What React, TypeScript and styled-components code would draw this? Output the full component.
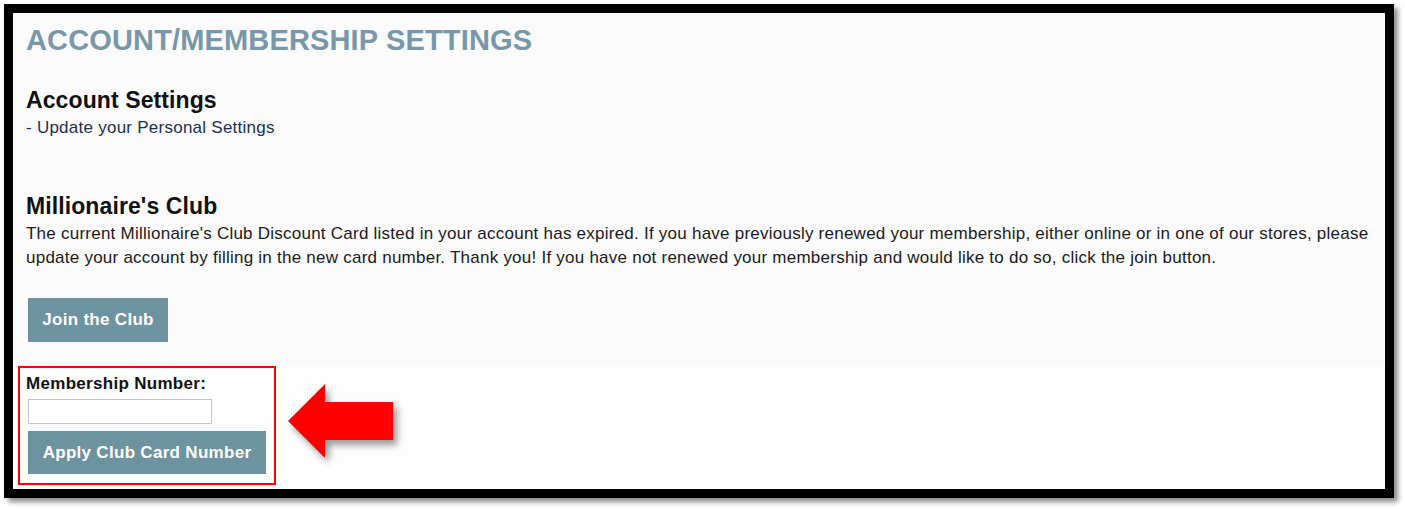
import React from "react";
import styled, { createGlobalStyle } from "styled-components";

const GlobalStyle = createGlobalStyle`
  html, body {
    margin: 0;
    padding: 0;
    background: #ffffff;
  }
  body {
    font-family: "Liberation Sans", Arial, sans-serif;
  }
`;

const Page = styled.div`
  width: 1405px;
  height: 509px;
  padding: 4px 11px 11px 4px;
  box-sizing: border-box;
  background: #ffffff;
`;

const Frame = styled.div`
  height: 494px;
  box-sizing: border-box;
  border: 9px solid #000000;
  box-shadow: 4px 4px 5px rgba(0, 0, 0, 0.45);
  display: flex;
  flex-direction: column;
  background: #fdfdfd;
`;

const UpperSection = styled.section`
  background: #fafafa;
  padding: 10px 8px 24px 13px;
  display: flex;
  flex-direction: column;
  align-items: flex-start;
`;

const PageTitle = styled.h1`
  margin: 0;
  font-size: 29px;
  line-height: 34px;
  letter-spacing: 0.15px;
  font-weight: bold;
  color: #7897a8;
`;

const SectionTitle = styled.h2<{ gap: number }>`
  margin: ${(p) => p.gap}px 0 0;
  font-size: 23px;
  line-height: 22px;
  letter-spacing: 0.1px;
  font-weight: bold;
  color: #111111;
`;

const SettingsLink = styled.a`
  display: block;
  margin-top: 6px;
  font-size: 17px;
  line-height: 22px;
  letter-spacing: 0.25px;
  color: #1b3150;
  text-decoration: none;
  cursor: pointer;
`;

const Notice = styled.p`
  margin: 5px 0 0;
  font-size: 17px;
  line-height: 24px;
  letter-spacing: 0.24px;
  color: #1a1a1a;
`;

const ActionButton = styled.button<{ h: number }>`
  height: ${(p) => p.h}px;
  padding: 0 12px;
  margin-left: 2px;
  border: none;
  background: #6e93a0;
  color: #ffffff;
  font-family: "Liberation Sans", Arial, sans-serif;
  font-size: 17px;
  letter-spacing: 0.3px;
  font-weight: bold;
  cursor: pointer;
`;

const JoinButton = styled(ActionButton)`
  margin-top: 28px;
  width: 140px;
`;

const LowerSection = styled.section`
  flex: 1;
  display: flex;
  align-items: center;
  padding: 0 0 4px 5px;
  background: #fdfdfd;
`;

const HighlightBox = styled.form`
  border: 2px solid #ff0000;
  padding: 6px 8px 9px 6px;
  display: flex;
  flex-direction: column;
  align-items: flex-start;
`;

const FieldLabel = styled.label`
  font-size: 17px;
  line-height: 20px;
  letter-spacing: 0.3px;
  font-weight: bold;
  color: #111111;
`;

const NumberInput = styled.input`
  margin: 5px 0 7px 2px;
  width: 184px;
  height: 25px;
  box-sizing: border-box;
  border: 1px solid #c4c4c4;
  background: #ffffff;
`;

const ApplyButton = styled(ActionButton)`
  width: 238px;
`;

const ArrowMark = styled.svg`
  margin: 0 0 0 10px;
  position: relative;
  top: -4px;
  overflow: visible;
`;

const PointerArrow = () => (
  <ArrowMark width="112" height="80" viewBox="0 0 112 80">
    <defs>
      <filter id="arrowShadow" x="-20%" y="-20%" width="150%" height="150%">
        <feDropShadow dx="4" dy="5" stdDeviation="3.5" floodColor="#000" floodOpacity="0.4" />
      </filter>
    </defs>
    <polygon
      points="2,39 39,2 39,20 107,20 107,58 39,58 39,76"
      fill="#ff0000"
      filter="url(#arrowShadow)"
    />
  </ArrowMark>
);

export default function App() {
  return (
    <>
      <GlobalStyle />
      <Page>
        <Frame>
          <UpperSection>
            <PageTitle>ACCOUNT/MEMBERSHIP SETTINGS</PageTitle>
            <SectionTitle gap={32}>Account Settings</SectionTitle>
            <SettingsLink>- Update your Personal Settings</SettingsLink>
            <SectionTitle gap={56}>Millionaire's Club</SectionTitle>
            <Notice>
              The current Millionaire's Club Discount Card listed in your account has expired. If you
              have previously renewed your membership, either online or in one of our stores, please
              update your account by filling in the new card number. Thank you! If you have not
              renewed your membership and would like to do so, click the join button.
            </Notice>
            <JoinButton h={44}>Join the Club</JoinButton>
          </UpperSection>
          <LowerSection>
            <HighlightBox onSubmit={(e) => e.preventDefault()}>
              <FieldLabel htmlFor="membershipNumber">Membership Number:</FieldLabel>
              <NumberInput id="membershipNumber" type="text" />
              <ApplyButton h={43}>Apply Club Card Number</ApplyButton>
            </HighlightBox>
            <PointerArrow />
          </LowerSection>
        </Frame>
      </Page>
    </>
  );
}
